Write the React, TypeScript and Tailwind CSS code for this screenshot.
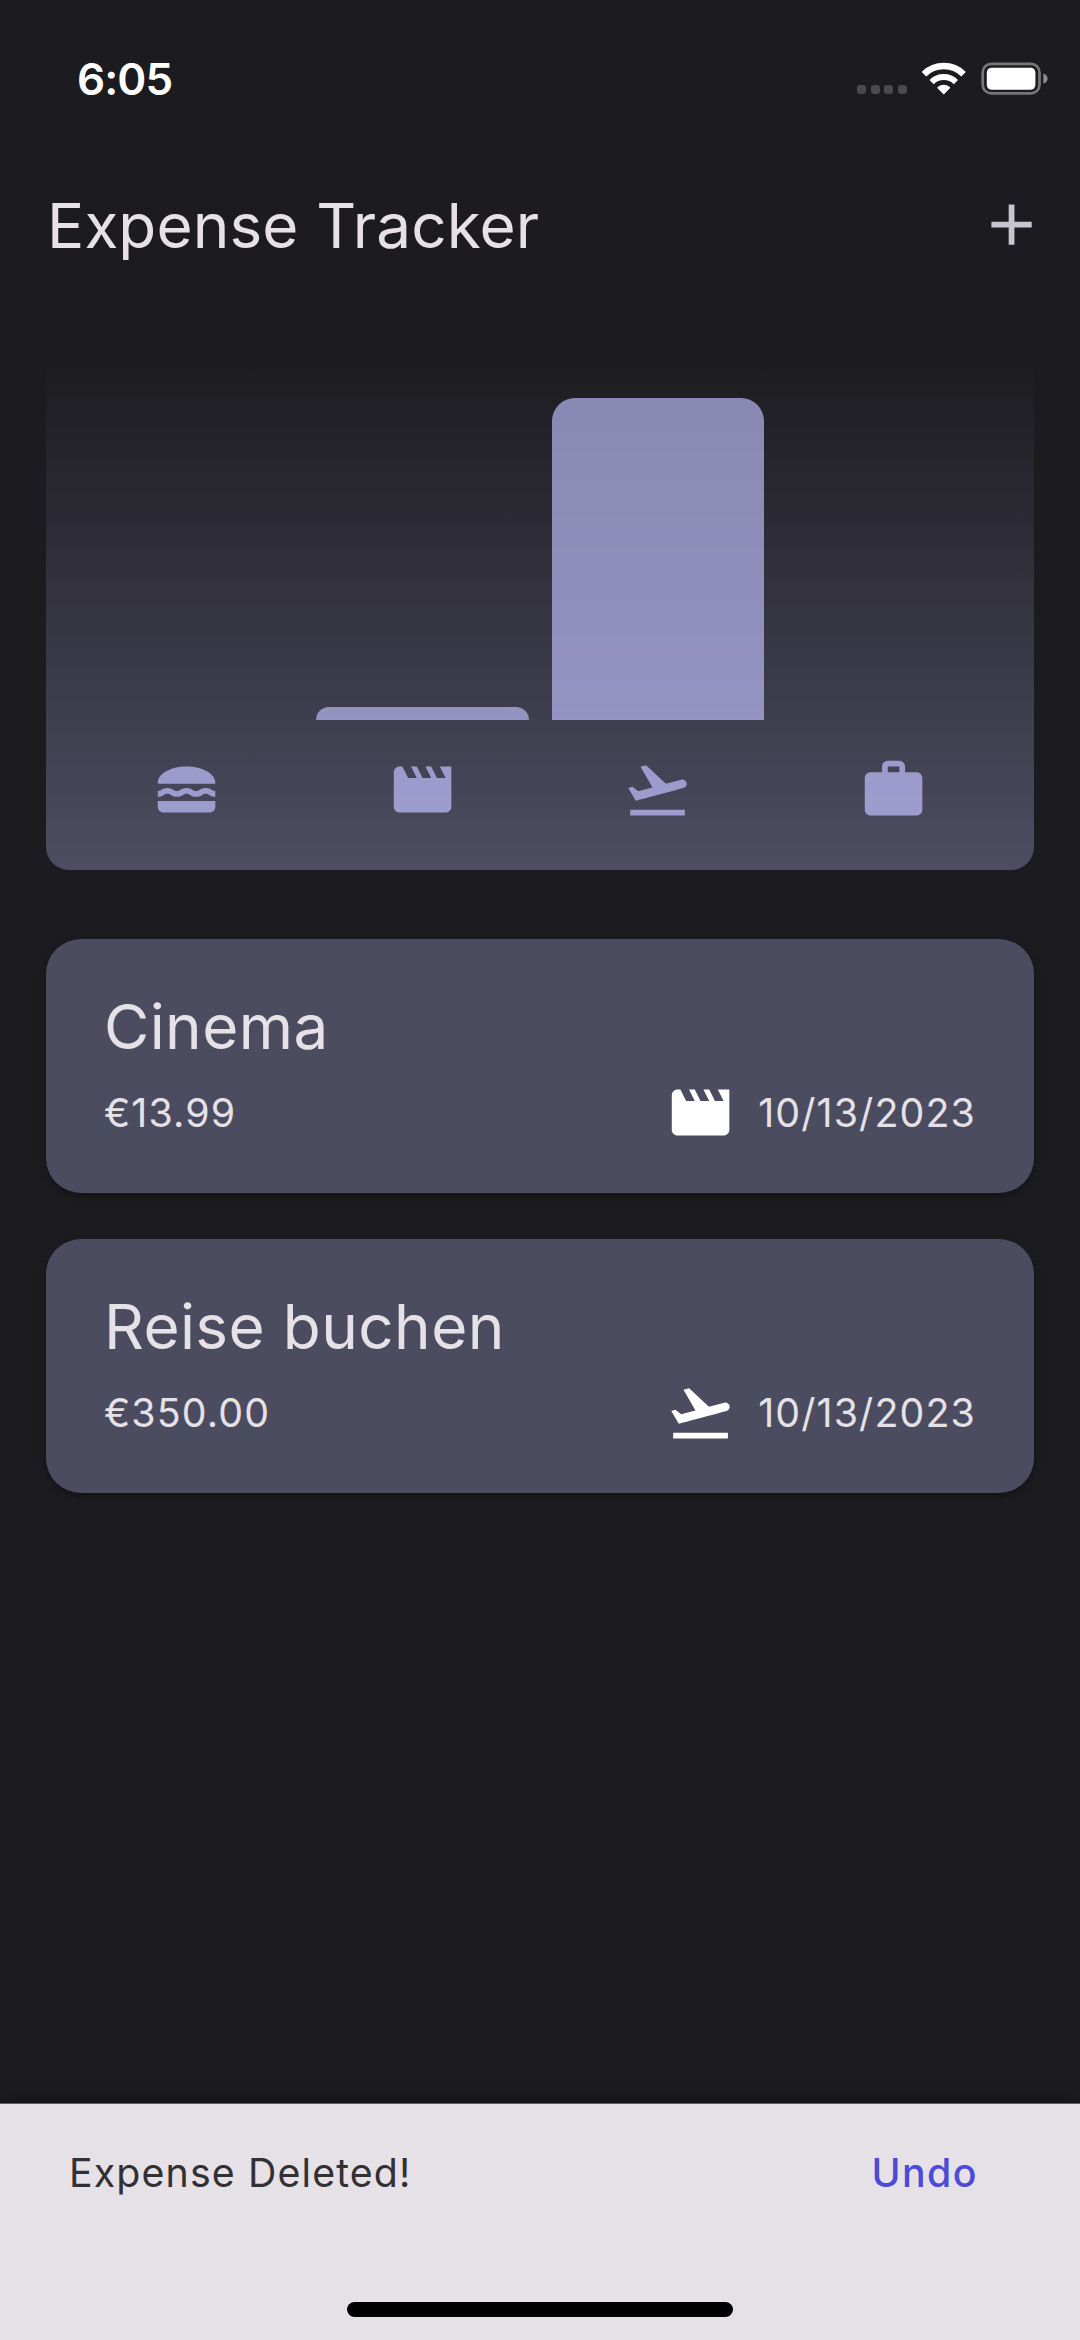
import type { IconType } from "react-icons";
import { MdAdd, MdFlightTakeoff, MdLunchDining, MdMovie, MdWork } from "react-icons/md";

type Category = "food" | "leisure" | "travel" | "work";

const categoryIcons: Record<Category, IconType> = {
  food: MdLunchDining,
  leisure: MdMovie,
  travel: MdFlightTakeoff,
  work: MdWork,
};

const expenses: { title: string; amount: number; date: string; category: Category }[] = [
  { title: "Cinema", amount: 13.99, date: "10/13/2023", category: "leisure" },
  { title: "Reise buchen", amount: 350, date: "10/13/2023", category: "travel" },
];

const categories: Category[] = ["food", "leisure", "travel", "work"];

function WifiIcon() {
  return (
    <svg className="h-[33px] w-[43.5px]" viewBox="0 0 43.5 33" fill="none">
      <path d="M1.95 12.2A28.2 28.2 0 0 1 41.55 12.2" stroke="white" strokeWidth="6.5" />
      <path d="M9.6 20.1A17.3 17.3 0 0 1 33.9 20.1" stroke="white" strokeWidth="6" />
      <path
        d="M21.2 31.9L15.6 26.2Q15 25.6 15.7 25A9.6 9.6 0 0 1 27.8 25Q28.5 25.6 27.9 26.2L22.3 31.9Q21.75 32.4 21.2 31.9Z"
        fill="white"
      />
    </svg>
  );
}

function BatteryIcon() {
  return (
    <svg className="h-[33px] w-[67px]" viewBox="0 0 67 33" fill="none">
      <rect x="1.7" y="1.8" width="56.8" height="29.6" rx="8.6" stroke="white" strokeOpacity="0.4" strokeWidth="2.7" />
      <rect x="5.8" y="5.8" width="48.6" height="21.9" rx="4.6" fill="white" />
      <path d="M62.4 11.4C65 12.3 66.6 14.2 66.6 16.6S65 20.9 62.4 21.8Z" fill="white" fillOpacity="0.5" />
    </svg>
  );
}

function StatusBar() {
  return (
    <div className="flex h-[144px] items-center justify-between pt-[13px] pr-[32px] pl-[77px]">
      <span className="text-[44px] leading-none font-semibold tracking-[-0.9px] text-white">6:05</span>
      <div className="flex h-[33px] items-start">
        <div className="mr-[15.5px] flex gap-[4.5px] self-end pb-px">
          {[0, 1, 2, 3].map((dot) => (
            <span key={dot} className="size-[9px] rounded-[3px] bg-[#4a494c]" />
          ))}
        </div>
        <WifiIcon />
        <div className="ml-[15.5px]">
          <BatteryIcon />
        </div>
      </div>
    </div>
  );
}

function Chart() {
  const totals = categories.map((category) =>
    expenses.filter((e) => e.category === category).reduce((sum, e) => sum + e.amount, 0),
  );
  const max = Math.max(...totals);

  return (
    <section className="mx-[46px] mt-[46.6px] flex h-[518.4px] flex-col rounded-[23px] bg-linear-to-t from-[#c2c1ff]/30 to-[#c2c1ff]/0 px-[23px] py-[46px]">
      <div className="flex flex-1 items-end">
        {totals.map((total, i) => (
          <div key={categories[i]} className="flex h-full flex-1 items-end px-[11.5px]">
            <div
              className="w-full rounded-t-[23px] bg-[#c2c1ff]/65"
              style={{ height: `${(total / max) * 100}%` }}
            />
          </div>
        ))}
      </div>
      <div className="mt-[34.5px] flex">
        {categories.map((category) => {
          const Icon = categoryIcons[category];
          return (
            <div key={category} className="flex flex-1 justify-center">
              <Icon className="size-[69.12px] text-[#c2c1ff]/70" />
            </div>
          );
        })}
      </div>
    </section>
  );
}

export default function App() {
  return (
    <main className="flex h-[2340px] w-[1080px] flex-col overflow-hidden bg-[#1c1b1f] font-['Inter',sans-serif] text-[#e5e1e6]">
      <StatusBar />
      <header className="flex h-[161px] items-center justify-between pr-[34px] pl-[47px]">
        <h1 className="pt-[2px] text-[62px] leading-[80px] font-normal tracking-[0.13px]">Expense Tracker</h1>
        <button aria-label="Add expense">
          <MdAdd className="size-[69.12px] text-[#c7c5d0]" />
        </button>
      </header>
      <Chart />
      <div className="mx-[46px] mt-[69px] flex flex-col gap-[46px]">
        {expenses.map((expense) => {
          const Icon = categoryIcons[expense.category];
          return (
            <article
              key={expense.title}
              className="h-[254px] rounded-[35px] bg-[#4b4c60] px-[58px] pt-[47px] shadow-[0_3px_6px_rgba(0,0,0,0.3)]"
            >
              <h2 className="text-[62px] leading-[82px] tracking-[0.4px]">{expense.title}</h2>
              <div className="mt-[10px] flex h-[69px] items-center justify-between text-[39.3px] leading-none tracking-[1.15px]">
                <span>€{expense.amount.toFixed(2)}</span>
                <div className="flex items-center gap-[23px]">
                  <Icon className="size-[69.12px] text-white" />
                  <span>{expense.date}</span>
                </div>
              </div>
            </article>
          );
        })}
      </div>
      <footer className="mt-auto h-[237px] border-t border-[#605e63] bg-[#e5e1e6] shadow-[0_0_14px_rgba(0,0,0,0.35)]">
        <div className="flex h-[138px] items-center justify-between pr-[102px] pl-[69px] text-[39.3px] leading-none">
          <span className="tracking-[1.13px] text-[#313033]">Expense Deleted!</span>
          <button className="font-medium tracking-[1.43px] text-[#4c4ad9]">Undo</button>
        </div>
        <div className="mx-auto mt-[60px] h-[15px] w-[386px] rounded-full bg-black" />
      </footer>
    </main>
  );
}
